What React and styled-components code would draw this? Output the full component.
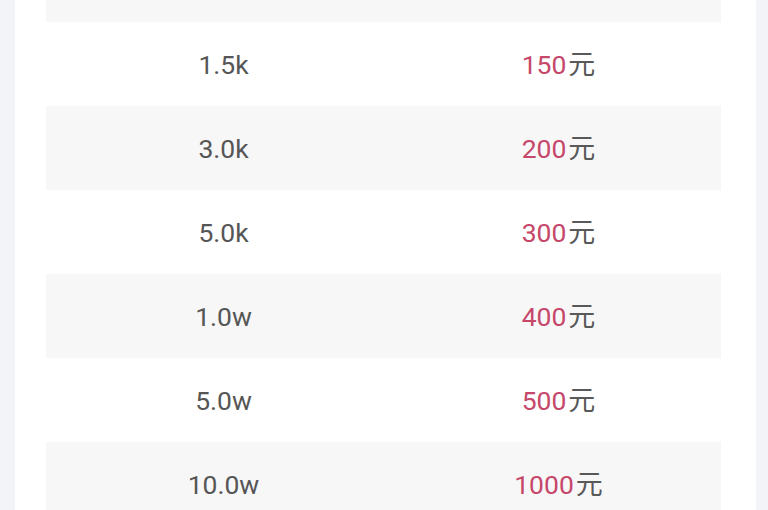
import React from 'react'
import styled, { createGlobalStyle } from 'styled-components'

const GlobalStyle = createGlobalStyle`
  body {
    margin: 0;
    background: #f2f4f8;
    font-family: Roboto, "Noto Sans CJK SC", sans-serif;
  }
`

const Page = styled.div`
  height: 510px;
  overflow: hidden;
  padding: 0 12px 0 15px;
`

const Card = styled.div`
  background: #ffffff;
  padding: 0 35px 0 31px;
  min-height: 100%;
`

const Table = styled.div`
  display: flex;
  flex-direction: column;
`

const TopEdge = styled.div`
  height: 22px;
  background: #f7f7f8;
`

const Row = styled.div`
  display: grid;
  grid-template-columns: 335px 335px;
  padding-left: 10px;
  height: 84px;
  align-items: center;
  background: ${p => (p.$striped ? '#f7f7f8' : '#ffffff')};
`

const Cell = styled.div`
  text-align: center;
  font-size: 26.5px;
  color: #565656;
  line-height: 1;
  padding-top: 3px;
`

const Price = styled.span`
  color: #c6476a;
  margin-right: 2px;
`

const Unit = styled.span`
  color: #595959;
  font-size: 27px;
`

const rows = [
  ['1.5k', '150'],
  ['3.0k', '200'],
  ['5.0k', '300'],
  ['1.0w', '400'],
  ['5.0w', '500'],
  ['10.0w', '1000'],
]

export default function App() {
  return (
    <>
      <GlobalStyle />
      <Page>
        <Card>
          <Table>
            <TopEdge />
            {rows.map((r, i) => (
              <Row key={r[0]} $striped={i % 2 === 1}>
                <Cell>{r[0]}</Cell>
                <Cell>
                  <Price>{r[1]}</Price>
                  <Unit>元</Unit>
                </Cell>
              </Row>
            ))}
          </Table>
        </Card>
      </Page>
    </>
  )
}
